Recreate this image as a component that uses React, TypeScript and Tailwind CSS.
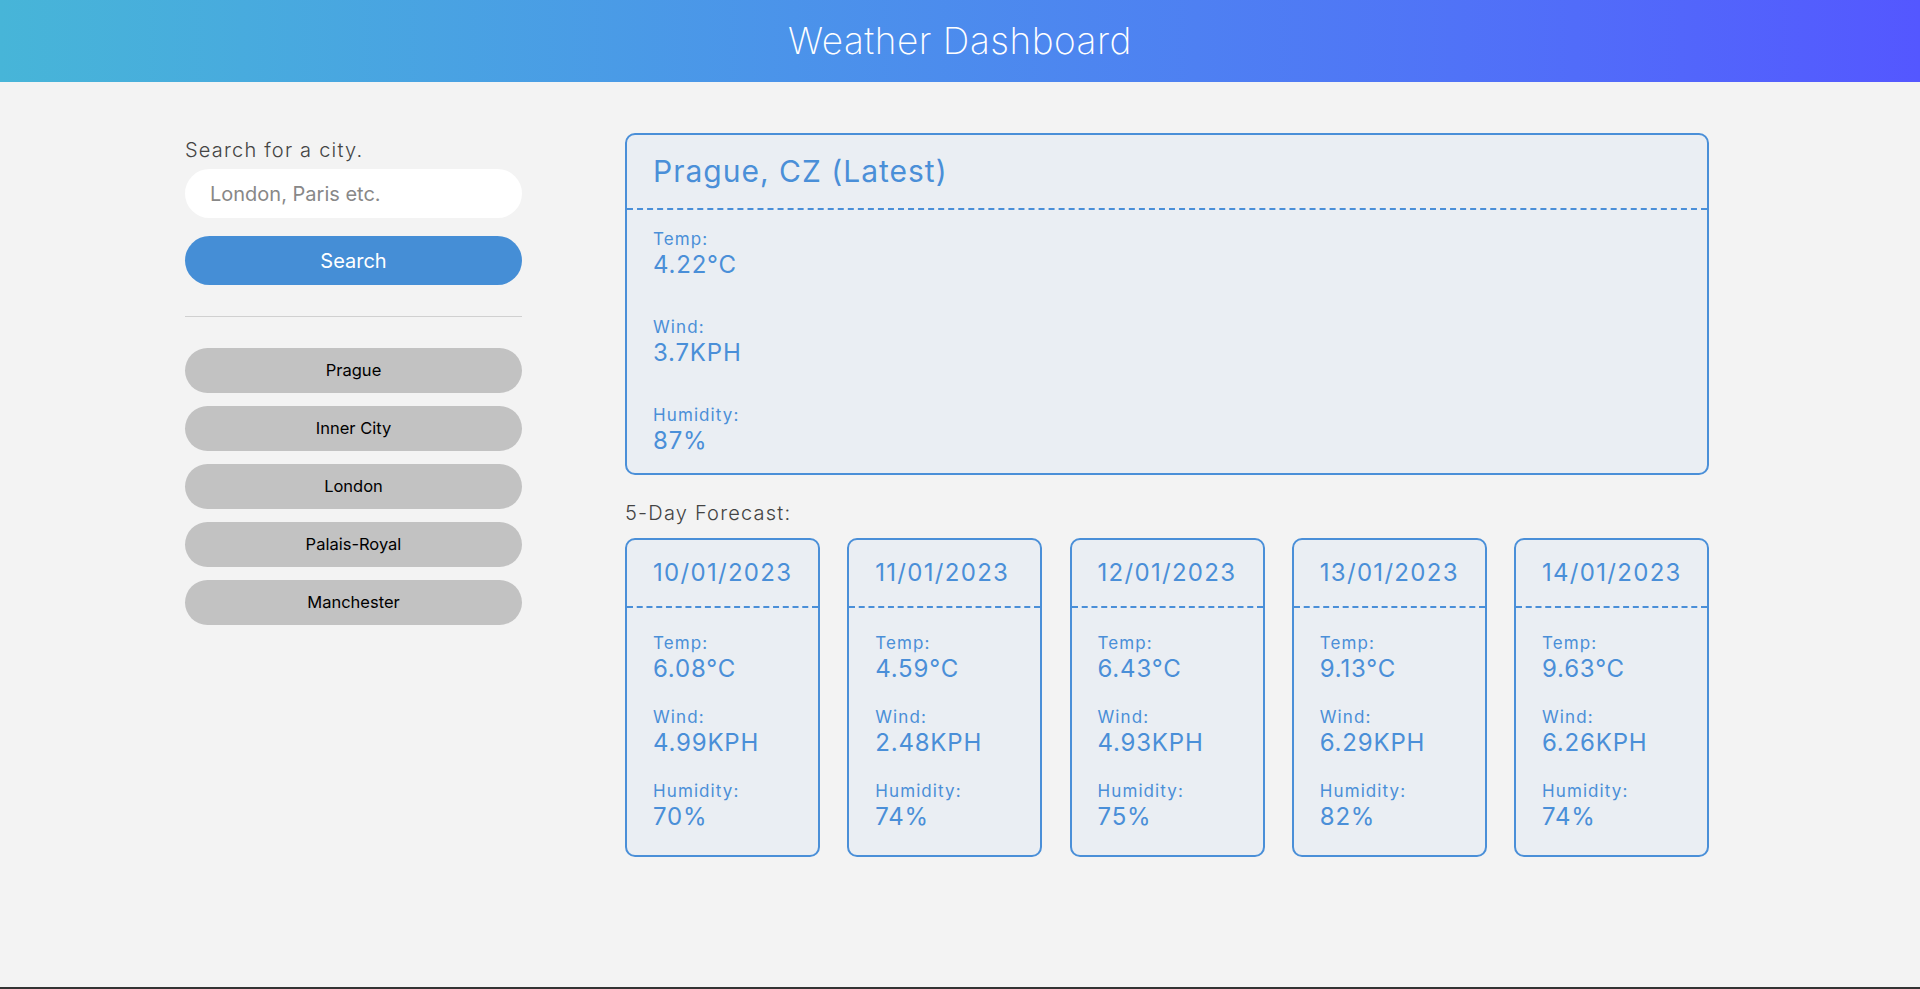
import React from "react";

const forecast = [
  { date: "10/01/2023", temp: "6.08°C", wind: "4.99KPH", hum: "70%" },
  { date: "11/01/2023", temp: "4.59°C", wind: "2.48KPH", hum: "74%" },
  { date: "12/01/2023", temp: "6.43°C", wind: "4.93KPH", hum: "75%" },
  { date: "13/01/2023", temp: "9.13°C", wind: "6.29KPH", hum: "82%" },
  { date: "14/01/2023", temp: "9.63°C", wind: "6.26KPH", hum: "74%" },
];

const cities = ["Prague", "Inner City", "London", "Palais-Royal", "Manchester"];

function Stat({ label, value }: { label: string; value: string }) {
  return (
    <div className="flex flex-col">
      <span className="text-[17px] leading-[21px] tracking-[1.1px]">{label}</span>
      <span className="text-[24px] leading-[29px] tracking-[0.8px]">{value}</span>
    </div>
  );
}

export default function App() {
  return (
    <div
      className="min-h-[989px] bg-[#f3f3f3] flex flex-col"
      style={{ fontFamily: "Inter, 'Noto Sans', sans-serif" }}
    >
      <header className="h-[82px] flex items-center justify-center bg-gradient-to-r from-[#47b5d8] to-[#5457ff]">
        <h1 className="text-[37px] font-extralight text-white tracking-[0.5px]">Weather Dashboard</h1>
      </header>

      <main className="flex-1 flex pl-[185px] pt-[51px] gap-[103px]">
        <aside className="w-[337px] flex flex-col">
          <p className="mt-[3px] text-[20px] leading-[28px] text-[#444] font-light tracking-[1.2px]">Search for a city.</p>
          <input
            className="mt-[5px] h-[49px] rounded-full bg-white px-[25px] text-[20px] text-[#333] placeholder:text-[#888] outline-none"
            placeholder="London, Paris etc."
          />
          <button className="mt-[18px] h-[49px] rounded-full bg-[#458ed6] text-white text-[20px]">Search</button>
          <hr className="mt-[31px] border-0 border-t border-[#d0d0d0]" />
          <div className="mt-[31px] flex flex-col gap-[13px]">
            {cities.map((c) => (
              <button key={c} className="h-[45px] rounded-full bg-[#c2c2c2] text-[16.5px] text-black">
                {c}
              </button>
            ))}
          </div>
        </aside>

        <section className="w-[1084px] flex flex-col">
          <div className="rounded-[10px] border-2 border-[#4a8fd8] bg-[#eaeef3] text-[#4a8fd8] h-[342px]">
            <div className="h-[75px] flex items-center px-[26px] border-b-2 border-dashed border-[#4a8fd8]">
              <h2 className="text-[30px] tracking-[1px]">Prague, CZ (Latest)</h2>
            </div>
            <div className="px-[26px] pt-[19px] flex flex-col gap-[38px]">
              <Stat label="Temp:" value="4.22°C" />
              <Stat label="Wind:" value="3.7KPH" />
              <Stat label="Humidity:" value="87%" />
            </div>
          </div>

          <p className="mt-[24px] text-[20px] leading-[28px] text-[#444] font-light tracking-[1.2px]">5-Day Forecast:</p>

          <div className="mt-[11px] flex justify-between">
            {forecast.map((f) => (
              <div
                key={f.date}
                className="w-[195px] h-[319px] rounded-[10px] border-2 border-[#4a8fd8] bg-[#eaeef3] text-[#4a8fd8]"
              >
                <div className="h-[68px] flex items-center px-[26px] border-b-2 border-dashed border-[#4a8fd8]">
                  <span className="text-[24px] tracking-[1.3px]">{f.date}</span>
                </div>
                <div className="px-[26px] pt-[25px] flex flex-col gap-[24px]">
                  <Stat label="Temp:" value={f.temp} />
                  <Stat label="Wind:" value={f.wind} />
                  <Stat label="Humidity:" value={f.hum} />
                </div>
              </div>
            ))}
          </div>
        </section>
      </main>
      <div className="h-[2px] bg-[#333]" />
    </div>
  );
}
